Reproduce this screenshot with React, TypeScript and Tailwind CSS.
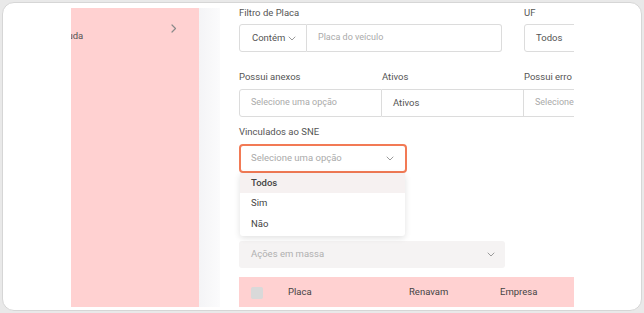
import React from "react";

const Chevron = ({ className = "" }: { className?: string }) => (
  <svg width="8" height="5" viewBox="0 0 8 5" className={className} fill="none">
    <path d="M1 1l3 3 3-3" stroke="#9a9a9a" strokeWidth="1" strokeLinecap="round" strokeLinejoin="round" />
  </svg>
);

export default function App() {
  return (
    <div className="w-[644px] h-[313px] bg-[#e9e9e9] pt-[2px] px-[2px] pb-[2px] overflow-hidden" style={{ fontFamily: "Roboto, 'Liberation Sans', sans-serif" }}>
      <div className="w-full h-[309px] bg-white rounded-[12px] border border-[#d6d6d6] pt-[5px] pl-[68px]">
        <div className="w-[503px] h-[299px] overflow-hidden flex">
          {/* sidebar */}
          <div className="w-[128px] shrink-0 bg-[#ffd1d1] flex items-start">
            <div className="flex w-full items-start">
              <span className="ml-[-12px] mt-[22px] text-[9.5px] leading-[12px] text-[#555]">Ajuda</span>
              <svg width="6" height="9" viewBox="0 0 6 9" className="ml-auto mr-[22px] mt-[16px]" fill="none">
                <path d="M1 1l3.5 3.5L1 8" stroke="#8a8a8a" strokeWidth="1.2" strokeLinecap="round" strokeLinejoin="round" />
              </svg>
            </div>
          </div>
          {/* strip */}
          <div className="w-[21px] shrink-0 bg-gradient-to-r from-[#f4f4f6] to-[#fbfbfc]" />
          {/* main */}
          <div className="flex-1 min-w-0 overflow-hidden pl-[19px] relative">
            <div className="w-[520px]">
              {/* row 1 */}
              <div className="flex">
                <div className="w-[263px]">
                  <div className="text-[9.5px] leading-[10px] text-[#555]">Filtro de Placa</div>
                  <div className="mt-[6px] flex h-[28px]">
                    <div className="w-[68px] border border-[#dcdcdc] rounded-l-[3px] flex items-center pl-[12px] pr-[10px] text-[9.5px] text-[#555]">
                      <span>Contém</span>
                      <Chevron className="ml-auto" />
                    </div>
                    <div className="flex-1 border border-l-0 border-[#dcdcdc] rounded-r-[3px] flex items-center pl-[11px] text-[9px] text-[#aaa]">
                      Placa do veículo
                    </div>
                  </div>
                </div>
                <div className="ml-[22px] w-[140px]">
                  <div className="text-[9.5px] leading-[10px] text-[#555]">UF</div>
                  <div className="mt-[6px] h-[28px] border border-[#dcdcdc] rounded-[3px] flex items-center pl-[11px] text-[9.5px] text-[#555]">
                    Todos
                  </div>
                </div>
              </div>
              {/* row 2 */}
              <div className="flex mt-[19px]">
                <div className="w-[143px]">
                  <div className="text-[9.5px] leading-[12px] text-[#555]">Possui anexos</div>
                  <div className="mt-[6px] h-[28px] border border-[#dcdcdc] rounded-l-[3px] flex items-center pl-[11px] text-[9px] text-[#aaa]">
                    Selecione uma opção
                  </div>
                </div>
                <div className="w-[142px]">
                  <div className="text-[9.5px] leading-[12px] text-[#555]">Ativos</div>
                  <div className="mt-[6px] h-[28px] border border-l-0 border-[#dcdcdc] flex items-center pl-[11px] text-[9.5px] text-[#555]">
                    Ativos
                  </div>
                </div>
                <div className="w-[142px]">
                  <div className="text-[9.5px] leading-[12px] text-[#555]">Possui erro</div>
                  <div className="mt-[6px] h-[28px] border border-l-0 border-[#dcdcdc] flex items-center pl-[11px] text-[9px] text-[#aaa]">
                    Selecione uma opção
                  </div>
                </div>
              </div>
              {/* row 3 */}
              <div className="mt-[9px] relative w-[168px]">
                <div className="text-[9.5px] leading-[12px] text-[#555]">Vinculados ao SNE</div>
                <div className="mt-[6px] h-[29px] border-2 border-[#f27a55] rounded-[4px] flex items-center pl-[10px] pr-[11px] text-[9.5px] text-[#aaa]">
                  <span>Selecione uma opção</span>
                  <Chevron className="ml-auto" />
                </div>
                <div className="absolute left-[1px] top-[47px] w-[165px] h-[63px] bg-white rounded-b-[3px] shadow-[0_2px_6px_rgba(0,0,0,0.12)] flex flex-col text-[9.5px] text-[#444] z-10">
                  <div className="h-[20px] bg-[#f6f1f1] flex items-center pl-[11px] font-medium">Todos</div>
                  <div className="h-[21px] flex items-center pl-[11px]">Sim</div>
                  <div className="h-[21px] flex items-center pl-[11px]">Não</div>
                </div>
              </div>
              {/* ações */}
              <div className="mt-[68px] w-[266px] h-[27px] bg-[#f5f3f3] rounded-[3px] flex items-center pl-[12px] pr-[10px] text-[9.5px] text-[#b0b0b0]">
                <span>Ações em massa</span>
                <Chevron className="ml-auto" />
              </div>
              {/* table header */}
              <div className="mt-[9px] h-[31px] bg-[#ffd1d1] flex items-center text-[9.5px] text-[#444]">
                <div className="ml-[12px] w-[12px] h-[12px] bg-[#d9d9d9] rounded-[2px]" />
                <div className="ml-[25px] w-[121px]">Placa</div>
                <div className="w-[91px]">Renavam</div>
                <div>Empresa</div>
              </div>
            </div>
          </div>
        </div>
      </div>
    </div>
  );
}
